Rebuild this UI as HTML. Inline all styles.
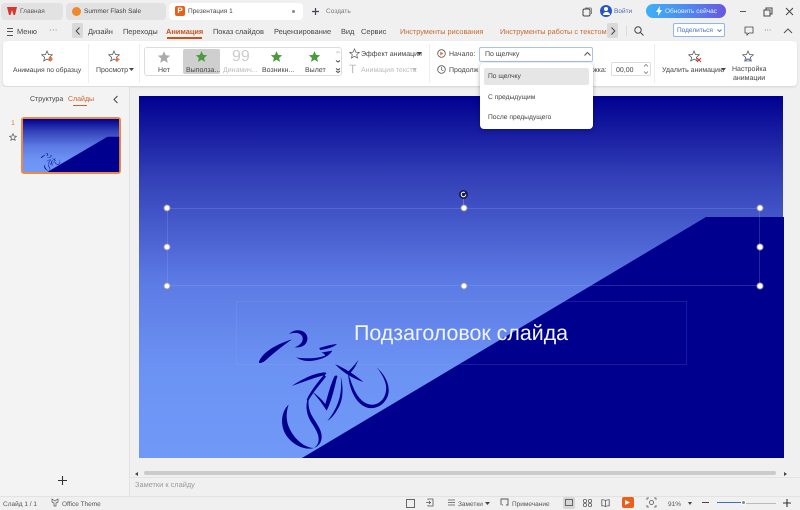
<!DOCTYPE html>
<html><head><meta charset="utf-8"><style>
html,body{margin:0;padding:0}
body{width:800px;height:509px;overflow:hidden;background:#f0f0f0;position:relative;font-family:"Liberation Sans",sans-serif;font-size:7px;color:#444;text-rendering:geometricPrecision}
.a{position:absolute}
.t{position:absolute;white-space:nowrap;line-height:10px;margin-top:1px}
.n{font-size:7.4px}
.s{font-size:6.5px}
.h{position:absolute;width:7px;height:7px;border-radius:50%;background:#fff;border:.5px solid #99a;box-sizing:border-box;transform:translate(-50%,-50%)}
svg{position:absolute;overflow:visible}
</style></head><body>
<svg width="0" height="0" style="position:absolute"><defs>
<linearGradient id="g" x1="0" y1="0" x2="0" y2="1"><stop offset="0" stop-color="#00008f"/><stop offset=".23" stop-color="#3441b8"/><stop offset=".51" stop-color="#5c7ae4"/><stop offset=".76" stop-color="#6c93f4"/><stop offset="1" stop-color="#7099f7"/></linearGradient>
<symbol id="sl" viewBox="0 0 644 362" preserveAspectRatio="none" overflow="visible">
<rect width="644" height="362" fill="url(#g)"/>
<g transform="translate(101 224) scale(.3333)" fill="#00008f" stroke="none">
<path d="M57 125C68 96 110 72 156 58C135 72 104 96 78 120C66 130 55 132 57 125Z"/>
<path d="M147 42C165 24 198 28 202 52C204 72 188 84 164 82C182 76 192 62 187 50C182 38 165 36 147 42Z"/>
<path d="M168 112C195 128 222 124 245 116C266 108 272 100 277 92L244 98C252 101 256 104 255 107C240 114 205 118 168 112Z"/>
<path d="M238 84C258 78 272 74 291 72C284 80 262 88 240 90Z"/>
<path d="M155 198C185 178 220 160 252 157C262 157 260 162 252 166C225 172 190 186 155 198Z"/>
<path d="M252 164C236 185 214 208 200 240L204 244C218 218 242 190 258 170Z"/>
<path d="M216 214C232 226 246 238 256 252C264 224 272 192 284 168C292 164 294 168 290 176C282 210 274 244 260 272C248 252 232 232 216 214Z"/>
<path d="M302 168C310 200 310 232 298 258C288 278 276 294 262 303C280 282 298 250 302 215C304 198 304 184 302 168Z"/>
<path d="M285 132C315 146 345 164 370 186C340 176 308 158 285 132Z"/>
<path d="M355 120C348 138 340 150 330 160L325 154C336 144 346 132 355 120Z"/>
<path d="M324 156C336 196 352 248 392 254C424 256 442 226 438 196C434 176 422 156 410 142C430 160 448 186 446 216C442 248 414 268 386 264C348 256 326 206 324 156Z"/>
<path d="M146 254C124 274 118 316 140 348C160 376 196 392 222 384C200 384 172 366 154 336C138 310 136 282 146 254Z"/>
<path d="M208 222C196 250 196 276 212 304C226 326 236 340 236 358C236 370 230 378 222 384C240 376 248 362 244 340C240 322 226 306 214 284C204 264 204 244 208 222Z"/>
</g>
<path d="M163 362L567 121H645V362Z" fill="#00008f"/></symbol>
<symbol id="st" viewBox="0 0 24 24"><path d="M12 2l3 7 7.500 .7-5.700 5 1.700 7.300-6.500-3.900-6.500 3.900 1.700-7.300-5.700-5L9 9z"/></symbol>
</defs></svg>

<!-- Top tabs -->
<div class="a" style="left:1px;top:3px;width:62px;height:17px;background:#e2e2e2;border-radius:4px"></div>
<div class="a" style="left:66px;top:3px;width:100px;height:17px;background:#e2e2e2;border-radius:4px"></div>
<div class="a" style="left:169px;top:3px;width:134px;height:17px;background:#fff;border-radius:4px"></div>
<svg style="left:7px;top:7px" width="10" height="9" viewBox="0 0 10 9"><path d="M0 0H10L8 8H6.500L5 3 3.500 8H2z" fill="#d9352b"/></svg>
<div class="t s" style="left:20px;top:6px;color:#555">Главная</div>
<div class="a" style="left:72px;top:7px;width:9px;height:9px;border-radius:50%;background:#ee8a2c"></div>
<div class="t s" style="left:84px;top:6px;color:#444">Summer Flash Sale</div>
<div class="a" style="left:175px;top:6px;width:10px;height:10px;border-radius:2px;background:#e8601c;color:#fff;font-size:8px;line-height:10px;text-align:center;font-weight:bold">P</div>
<div class="t s" style="left:188px;top:6px;color:#444">Презентация 1</div>
<div class="a" style="left:292px;top:10px;width:3px;height:3px;border-radius:50%;background:#888"></div>
<svg style="left:311px;top:7px" width="9" height="9"><path d="M4.500 1V8M1 4.500H8" stroke="#445" stroke-width="1.200"/></svg>
<div class="t s" style="left:326px;top:6px;color:#777">Создать</div>
<svg style="left:582px;top:7px" width="10" height="10"><rect x="1" y="2" width="7" height="7" rx="1.500" fill="none" stroke="#444"/><path d="M3 1H8.500Q9.500 1 9.500 2V7" fill="none" stroke="#888"/></svg>
<div class="a" style="left:600px;top:5px;width:12px;height:12px;border-radius:50%;background:#2a55c4"></div>
<div class="a" style="left:604px;top:7px;width:4px;height:4px;border-radius:50%;background:#fff"></div>
<div class="a" style="left:602.500px;top:12px;width:7px;height:3px;border-radius:3px 3px 0 0;background:#fff"></div>
<div class="t s" style="left:614px;top:6px;color:#4a6bb5">Войти</div>
<div class="a" style="left:646px;top:4px;width:80px;height:14px;border-radius:7px;background:linear-gradient(90deg,#3fb0f5,#4d8cf0 50%,#6a56e0)"></div>
<svg style="left:655px;top:6px" width="8" height="10"><path d="M5 0L1 6H3.500L3 10 7 4H4.500z" fill="#fff"/></svg>
<div class="t s" style="left:665px;top:6px;color:#e4f0ff">Обновить сейчас</div>
<div class="a" style="left:740px;top:11px;width:6px;height:1px;background:#555"></div>
<svg style="left:763px;top:7px" width="10" height="10"><rect x="1" y="3" width="6" height="6" fill="none" stroke="#444"/><path d="M3 3V1H9V7H7" fill="none" stroke="#444"/></svg>
<svg style="left:785px;top:7px" width="9" height="9"><path d="M1 1L8 8M8 1L1 8" stroke="#444"/></svg>

<!-- Nav row -->
<div class="a" style="left:7px;top:28px;width:6px;height:6px;border-top:1px solid #555;border-bottom:1px solid #555"></div>
<div class="a" style="left:7px;top:30.500px;width:6px;height:1px;background:#555"></div>
<div class="t n" style="left:17px;top:26px">Меню</div>
<div class="t n" style="left:49px;top:24px;letter-spacing:.5px">···</div>
<div class="a" style="left:72px;top:23px;width:11px;height:15px;background:#d9d9d9;border-radius:2px"></div>
<svg style="left:75px;top:27px" width="6" height="8"><path d="M4.500 .5L1.200 4 4.500 7.500" fill="none" stroke="#444"/></svg>
<div class="t n" style="left:88px;top:26px">Дизайн</div>
<div class="t n" style="left:123px;top:26px">Переходы</div>
<div class="t n" style="left:166px;top:26px;color:#c8531f;font-weight:bold">Анимация</div>
<div class="a" style="left:167px;top:37px;width:35px;height:1.500px;background:#c8531f"></div>
<div class="t n" style="left:213px;top:26px">Показ слайдов</div>
<div class="t n" style="left:274px;top:26px">Рецензирование</div>
<div class="t n" style="left:341px;top:26px">Вид</div>
<div class="t n" style="left:361px;top:26px">Сервис</div>
<div class="t n" style="left:400px;top:26px;color:#c46a32;font-size:7.300px">Инструменты рисования</div>
<div class="t n" style="left:500px;top:26px;color:#c46a32;font-size:7.300px">Инструменты работы с текстом</div>
<div class="a" style="left:607px;top:23px;width:11px;height:15px;background:#d9d9d9;border-radius:2px"></div>
<svg style="left:610px;top:27px" width="6" height="8"><path d="M1.500 .5L4.800 4 1.500 7.500" fill="none" stroke="#444"/></svg>
<div class="a" style="left:626px;top:25px;width:1px;height:11px;background:#ddd"></div>
<svg style="left:634px;top:26px" width="10" height="10"><circle cx="4" cy="4" r="3.200" fill="none" stroke="#444"/><path d="M6.500 6.500L9.500 9.500" stroke="#444"/></svg>
<div class="a" style="left:673px;top:23px;width:52px;height:14px;border:1px solid #8fb6e8;border-radius:2px;background:#fff;box-sizing:border-box"></div>
<div class="t" style="left:677px;top:25px;color:#3f6fc0;font-size:6.500px">Поделиться</div>
<svg style="left:717px;top:29px" width="5" height="4"><path d="M.5 .5L2.500 2.500 4.500 .5" fill="none" stroke="#5b82c8"/></svg>
<svg style="left:744px;top:26px" width="10" height="10"><path d="M1 1H9V7H5L3 9V7H1z" fill="none" stroke="#444" stroke-width=".8"/></svg>
<div class="t n" style="left:764px;top:24px">···</div>
<svg style="left:783px;top:28px" width="10" height="6"><path d="M1 5L5 1 9 5" fill="none" stroke="#555"/></svg>

<!-- Ribbon -->
<div class="a" style="left:3px;top:41px;width:794px;height:45px;background:#fff;border-radius:4px;box-shadow:0 1px 2px rgba(0,0,0,.12)"></div>
<div class="a" style="left:88px;top:44px;width:1px;height:39px;background:#eee"></div>
<div class="a" style="left:139px;top:44px;width:1px;height:39px;background:#eee"></div>
<div class="a" style="left:429px;top:44px;width:1px;height:39px;background:#eee"></div>
<div class="a" style="left:654px;top:44px;width:1px;height:39px;background:#eee"></div>
<svg style="left:41px;top:50px" width="12" height="12"><use href="#st" width="12" height="12" fill="#fff" stroke="#555" stroke-width="1.500"/><circle cx="9.500" cy="9" r="2" fill="#e2763c"/></svg>
<div class="t" style="left:13px;top:65px;color:#444;font-size:6.750px">Анимация по образцу</div>
<svg style="left:108px;top:50px" width="12" height="12"><use href="#st" width="12" height="12" fill="#fff" stroke="#555" stroke-width="1.500"/><path d="M8 7L12 9.500 8 12z" fill="#e2763c"/></svg>
<div class="t" style="left:96px;top:65px">Просмотр</div>
<svg style="left:129px;top:68px" width="5" height="3"><path d="M0 0H5L2.500 3z" fill="#444"/></svg>

<div class="a" style="left:144px;top:47px;width:198px;height:29px;border:1px solid #ddd;border-radius:3px;box-sizing:border-box;background:#fff"></div>
<div class="a" style="left:183px;top:49px;width:37px;height:25px;background:#cfcfcf;border-radius:2px"></div>
<svg style="left:157px;top:50px" width="14" height="14"><use href="#st" width="14" height="14" fill="#aaa"/></svg>
<svg style="left:195px;top:50px" width="13" height="13"><use href="#st" width="13" height="13" fill="#4d9a3d"/></svg>
<div class="t" style="left:232px;top:48px;font-size:16px;line-height:16px;color:#ccc">99</div>
<svg style="left:270px;top:50px" width="13" height="13"><use href="#st" width="13" height="13" fill="#4d9a3d"/></svg>
<svg style="left:308px;top:50px" width="13" height="13"><use href="#st" width="13" height="13" fill="#4d9a3d"/></svg>
<div class="t" style="left:158px;top:65px">Нет</div>
<div class="t" style="left:186px;top:65px">Выполза...</div>
<div class="t" style="left:223px;top:65px;color:#bbb">Динамич...</div>
<div class="t" style="left:262px;top:65px">Возникн...</div>
<div class="t" style="left:305px;top:65px">Вылет</div>
<svg style="left:335px;top:50px" width="6" height="24"><path d="M1 3L3 1.500 5 3" fill="none" stroke="#ccc"/><path d="M1 10.500L3 12 5 10.500" fill="none" stroke="#444"/><path d="M1 18.500L3 20 5 18.500M1 21L3 22.500 5 21" fill="none" stroke="#444"/></svg>
<svg style="left:349px;top:48px" width="11" height="11"><use href="#st" width="11" height="11" fill="#fff" stroke="#555" stroke-width="1.500"/></svg>
<div class="t" style="left:361px;top:49px;color:#444">Эффект анимации</div>
<svg style="left:417px;top:52px" width="5" height="3"><path d="M0 0H5L2.500 3z" fill="#444"/></svg>
<div class="t" style="left:349px;top:63px;font-size:12px;color:#bbb">T</div>
<div class="t" style="left:361px;top:65px;color:#bbb">Анимация текста</div>
<svg style="left:412px;top:68px" width="5" height="3"><path d="M0 0H5L2.500 3z" fill="#bbb"/></svg>

<svg style="left:437px;top:49px" width="9" height="9"><circle cx="4.500" cy="4.500" r="3.800" fill="none" stroke="#555" stroke-width=".8"/><path d="M3.200 2.500L6.500 4.500 3.200 6.500z" fill="#e2763c"/></svg>
<div class="t" style="left:449px;top:49px">Начало:</div>
<svg style="left:437px;top:65px" width="9" height="9"><circle cx="4.500" cy="4.500" r="3.800" fill="none" stroke="#555" stroke-width=".8"/><path d="M4.500 2V4.800L6.500 5.800" fill="none" stroke="#555" stroke-width=".7"/></svg>
<div class="t" style="left:449px;top:65px">Продолж</div>
<div class="a" style="left:479px;top:47px;width:114px;height:15px;border:1px solid #a9c3ea;border-radius:2px;box-sizing:border-box;background:#fff"></div>
<div class="t" style="left:485px;top:49px">По щелчку</div>
<svg style="left:584px;top:52px" width="7" height="4"><path d="M.5 3.500L3.500 .5 6.500 3.500" fill="none" stroke="#555"/></svg>
<div class="t" style="left:593px;top:65px">жка:</div>
<div class="a" style="left:611px;top:62px;width:40px;height:14px;border:1px solid #ddd;border-radius:2px;box-sizing:border-box;background:#fff"></div>
<div class="t" style="left:616px;top:65px">00,00</div>
<svg style="left:643px;top:63px" width="6" height="12"><path d="M1 3.500L3 1.500 5 3.500M1 8.500L3 10.500 5 8.500" fill="none" stroke="#777" stroke-width=".8"/></svg>
<svg style="left:688px;top:50px" width="14" height="13"><use href="#st" width="12" height="12" fill="#fff" stroke="#555" stroke-width="1.500"/><path d="M9 8L13 12M13 8L9 12" stroke="#d03030"/></svg>
<div class="t" style="left:662px;top:65px">Удалить анимацию</div>
<svg style="left:721px;top:68px" width="5" height="3"><path d="M0 0H5L2.500 3z" fill="#444"/></svg>
<svg style="left:742px;top:50px" width="13" height="13"><use href="#st" width="12" height="12" fill="#fff" stroke="#555" stroke-width="1.500"/><path d="M3 9H9M3 11H9" stroke="#5b82c8" stroke-width=".8"/></svg>
<div class="t" style="left:732px;top:64px">Настройка</div>
<div class="t" style="left:733px;top:73px">анимации</div>

<!-- Left panel -->
<div class="a" style="left:0;top:87px;width:129px;height:410px;background:#f3f3f3;border-right:1px solid #e2e2e2"></div>
<div class="t" style="left:30px;top:94px">Структура</div>
<div class="t" style="left:68px;top:94px;color:#c8632c">Слайды</div>
<div class="a" style="left:73px;top:105px;width:14px;height:1px;background:#c8632c"></div>
<svg style="left:113px;top:95px" width="6" height="9"><path d="M4.500 1L1 4.500 4.500 8" fill="none" stroke="#444"/></svg>
<div class="t" style="left:11px;top:118px;color:#e07a30">1</div>
<svg style="left:9px;top:133px" width="8" height="8"><use href="#st" width="8" height="8" fill="none" stroke="#555" stroke-width="2"/></svg>
<div class="a" style="left:21px;top:117px;width:100px;height:57px;border:2px solid #ea8a45;border-radius:3px;box-sizing:border-box"></div>
<svg style="left:23px;top:119px" width="96" height="53"><use href="#sl" width="96" height="53"/></svg>
<svg style="left:58px;top:476px" width="9" height="9"><path d="M4.500 0V9M0 4.500H9" stroke="#333" stroke-width="1.100"/></svg>

<!-- Slide -->
<svg style="left:139px;top:96px" width="645" height="363"><use href="#sl" width="644" height="362"/></svg>
<div class="a" style="left:167px;top:208px;width:593px;height:78px;border:1px solid rgba(160,180,240,.22);box-sizing:border-box"></div>
<div class="a" style="left:236px;top:301px;width:451px;height:64px;border:1px solid rgba(160,180,240,.15);box-sizing:border-box"></div>
<div class="t" style="left:354px;top:320px;font-size:21.400px;line-height:25px;color:#f2f5ff">Подзаголовок слайда</div>
<div class="a" style="left:463px;top:198px;width:1px;height:10px;background:rgba(200,210,250,.3)"></div>
<div class="h" style="left:167px;top:208px"></div><div class="h" style="left:463.500px;top:208px"></div><div class="h" style="left:760px;top:208px"></div>
<div class="h" style="left:167px;top:247px"></div><div class="h" style="left:760px;top:247px"></div>
<div class="h" style="left:167px;top:286px"></div><div class="h" style="left:463.500px;top:286px"></div><div class="h" style="left:760px;top:286px"></div>
<div class="a" style="left:459px;top:190px;width:9px;height:9px;border-radius:50%;background:#1a1a50"></div>
<svg style="left:460px;top:191px" width="7" height="7"><path d="M5.800 3.500A2.300 2.300 0 1 1 4.800 1.600" fill="none" stroke="#fff" stroke-width="1"/></svg>

<!-- Dropdown -->
<div class="a" style="left:480px;top:63px;width:113px;height:66px;background:#fff;border-radius:4px;box-shadow:0 1px 5px rgba(0,0,0,.3)"></div>
<div class="a" style="left:484px;top:68px;width:105px;height:17px;background:#e6e6e6;border-radius:2px"></div>
<div class="t" style="left:488px;top:71px;font-size:6.700px">По щелчку</div>
<div class="t" style="left:488px;top:92px;font-size:6.700px">С предыдущим</div>
<div class="t" style="left:488px;top:112px;font-size:6.700px">После предыдущего</div>

<!-- Scrollbar + notes -->
<svg style="left:135px;top:472px" width="4" height="4"><path d="M3 0V4L0 2z" fill="#444"/></svg>
<div class="a" style="left:144px;top:471px;width:632px;height:4px;background:#cbcbcb;border-radius:2px"></div>
<svg style="left:784px;top:472px" width="4" height="4"><path d="M0 0V4L3 2z" fill="#444"/></svg>
<div class="a" style="left:130px;top:477px;width:670px;height:1px;background:#e4e4e4"></div>
<div class="t n" style="left:135px;top:479px;color:#999">Заметки к слайду</div>
<div class="a" style="left:0;top:496px;width:800px;height:1px;background:#e2e2e2"></div>

<!-- Status -->
<div class="t s" style="left:3px;top:499px;color:#555">Слайд 1 / 1</div>
<svg style="left:51px;top:498px" width="8" height="9"><path d="M1 1L4 3 7 1V4L5 5V8H3V5L1 4z" fill="none" stroke="#555" stroke-width=".7"/></svg>
<div class="t s" style="left:62px;top:499px;color:#555">Office Theme</div>
<div class="a" style="left:406px;top:499px;width:7px;height:7px;border:1px solid #666"></div>
<svg style="left:425px;top:498px" width="9" height="9"><path d="M3 2V1H8V8H3V7M1 4.500H5.500M4 3L5.500 4.500 4 6" fill="none" stroke="#555" stroke-width=".8"/></svg>
<svg style="left:448px;top:499px" width="7" height="7"><path d="M0 1H7M0 3.500H7M0 6H7" stroke="#555" stroke-width=".8"/></svg>
<div class="t s" style="left:458px;top:499px;color:#555">Заметки</div>
<svg style="left:485px;top:502px" width="5" height="3"><path d="M0 0H5L2.500 3z" fill="#444"/></svg>
<svg style="left:500px;top:498px" width="9" height="9"><path d="M1 7V1H8V7H6M3 7H2" fill="none" stroke="#555" stroke-width=".9"/></svg>
<div class="t s" style="left:512px;top:499px;color:#555">Примечание</div>
<div class="a" style="left:563px;top:497px;width:12px;height:12px;background:#d6d6d6;border-radius:2px"></div>
<div class="a" style="left:565px;top:499px;width:8px;height:7px;border:1px solid #666;box-sizing:border-box"></div>
<svg style="left:583px;top:499px" width="9" height="8"><rect x=".5" y=".5" width="3" height="3" rx="1" fill="none" stroke="#555" stroke-width=".8"/><rect x="5.500" y=".5" width="3" height="3" rx="1" fill="none" stroke="#555" stroke-width=".8"/><rect x=".5" y="4.500" width="3" height="3" rx="1" fill="none" stroke="#555" stroke-width=".8"/><rect x="5.500" y="4.500" width="3" height="3" rx="1" fill="none" stroke="#555" stroke-width=".8"/></svg>
<svg style="left:601px;top:499px" width="9" height="8"><path d="M4.500 1.500Q2.500 .5 .8 .8V6.800Q2.500 6.500 4.500 7.500 6.500 6.500 8.200 6.800V.8Q6.500 .5 4.500 1.500V7.500" fill="none" stroke="#555" stroke-width=".8"/></svg>
<div class="a" style="left:622px;top:497px;width:12px;height:11px;background:#e8601c;border-radius:2px"></div>
<svg style="left:625px;top:500px" width="5" height="5"><path d="M0 0L5 2.500 0 5z" fill="#fff"/></svg>
<svg style="left:647px;top:498px" width="9" height="9"><path d="M0 2V0H2M7 0H9V2M9 7V9H7M2 9H0V7" fill="none" stroke="#555" stroke-width=".8"/><circle cx="4.500" cy="4.500" r="2" fill="none" stroke="#555" stroke-width=".8"/></svg>
<div class="t s" style="left:668px;top:499px;color:#555">91%</div>
<svg style="left:688px;top:502px" width="4" height="3"><path d="M0 0H4L2 3z" fill="#444"/></svg>
<div class="a" style="left:702px;top:502px;width:7px;height:1.200px;background:#444"></div>
<div class="a" style="left:717px;top:502px;width:26px;height:1px;background:#3f6fc0"></div>
<div class="a" style="left:743px;top:502.500px;width:33px;height:.8px;background:#bbb"></div>
<div class="a" style="left:741px;top:500px;width:5px;height:5px;border-radius:50%;background:#888;border:.5px solid #fff;box-sizing:border-box"></div>
<svg style="left:783px;top:499px" width="8" height="8"><path d="M4 0V8M0 4H8" stroke="#333" stroke-width="1.100"/></svg>
</body></html>
